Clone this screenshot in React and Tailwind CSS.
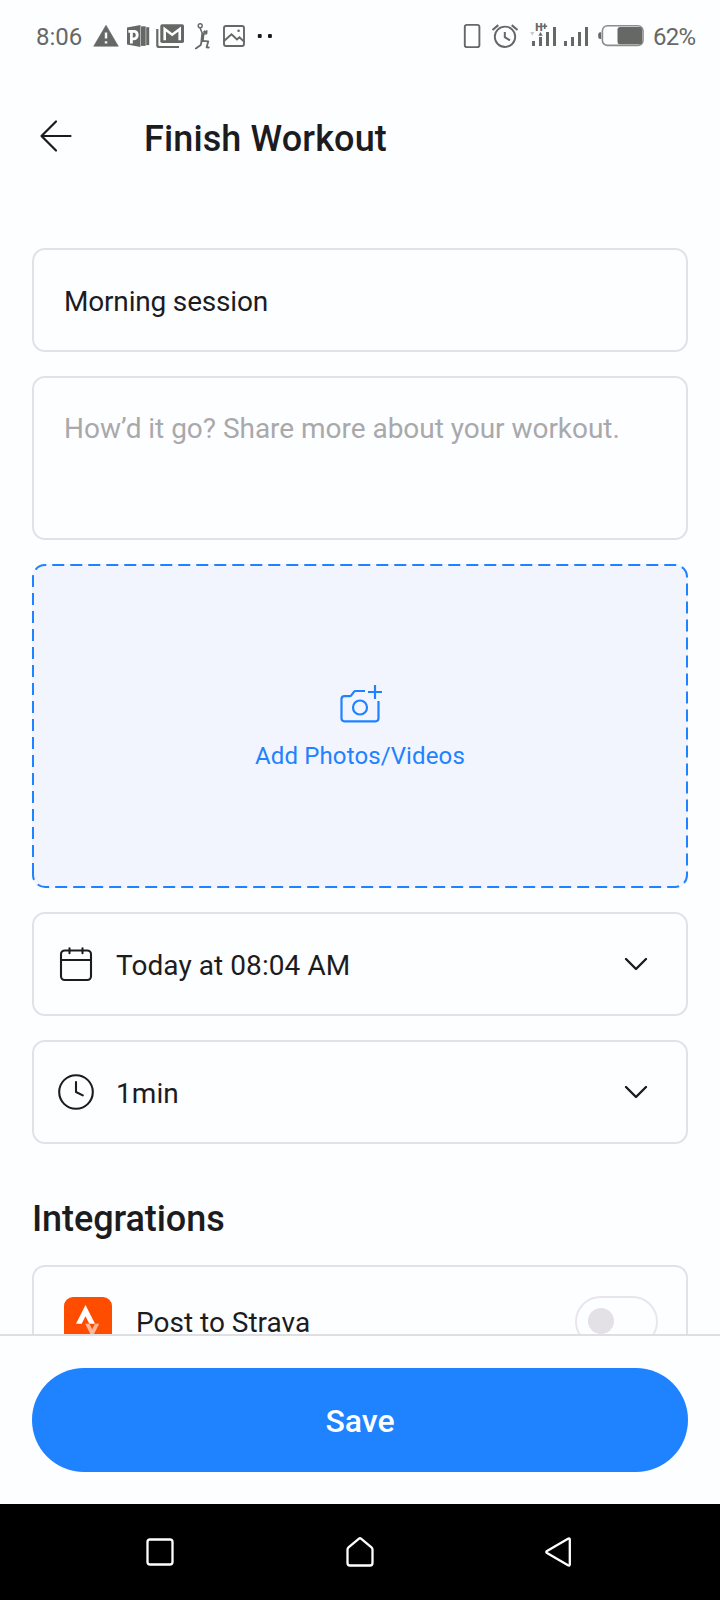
import React from "react";

function LeftStatus() {
  return (
    <div className="flex items-center text-[#666866]">
      <span className="w-[56px] pt-[2px] text-[24px] leading-7">8:06</span>
      <svg className="h-7 w-[28px]" viewBox="92 22 28 28" fill="currentColor">
        <path fillRule="evenodd" stroke="currentColor" strokeWidth=".6" strokeLinejoin="round" d="M106 25.2 118.3 46.2h-24.6zM104.6 32.2v6.6h2.9v-6.6zM104.6 41v2.8h2.9V41z" />
      </svg>
      <svg className="ml-[6px] h-7 w-[24px]" viewBox="126 22 24 28" fill="currentColor">
        <path d="M127 27.5 140.5 25v22L127 44.6z" />
        <path d="M141 26.3h4.7v19.6h-4.7z" />
        <path d="M146.2 27.2h3v17.9h-3z" />
        <path fillRule="evenodd" d="M128.4 30h6.2c5.4 0 5.600 10.200-.4 10.200h-1.400v3.300h-2.800v-10.700h-1.600zM132.800 32.800v4.600h1.300c2.200 0 2.200-4.600 0-4.600z" fill="#fdfeff" />
      </svg>
      <svg className="ml-[5px] h-7 w-[30px]" viewBox="155 22 30 28" fill="currentColor">
        <path d="M156.200 29h2.200v16a1 1 0 0 0 1 1H179v2.100h-20.500a2.300 2.300 0 0 1-2.300-2.300z" />
        <rect x="160.300" y="24.200" width="23.700" height="18.800" rx="1.800" />
        <path d="M164.700 40.300V29l7.500 5.700 7.500-5.700v11.300" fill="none" stroke="#fdfeff" strokeWidth="2.600" />
      </svg>
      <svg className="ml-[9px] h-7 w-[18px]" viewBox="194 22 18 28" fill="none" stroke="currentColor" strokeLinecap="round" strokeLinejoin="round">
        <circle cx="200.200" cy="25.700" r="2" strokeWidth="1.400" />
        <circle cx="204.800" cy="32" r="1.200" fill="currentColor" strokeWidth=".8" />
        <path d="m200.200 28.300 1.800 4.500 1.600 1.200 3-.2.200-3" strokeWidth="1.500" />
        <path d="m202.800 34.500-.6 6" strokeWidth="3.200" />
        <path d="m201.600 41-.8 4-5 3.400M202.500 40.800l5.800.5-1.700 6 2.200.2" strokeWidth="1.800" />
      </svg>
      <svg className="ml-[10px] h-7 w-[24px]" viewBox="222 22 24 28" fill="none" stroke="currentColor" strokeWidth="1.900">
        <rect x="224" y="26" width="20" height="20" rx="2" />
        <path d="m224 41 7.500-6.800 5.500 5.300 2.400-2.200 4.600 4.200" />
        <circle cx="238.600" cy="30.700" r="1.300" fill="currentColor" stroke="none" />
      </svg>
      <svg className="ml-[11px] h-7 w-[16px]" viewBox="257 22 16 28" fill="#1c1c1c">
        <rect x="257.800" y="34" width="3.900" height="3.900" rx="1" />
        <rect x="268" y="34" width="3.900" height="3.900" rx="1" />
      </svg>
    </div>
  );
}

function RightStatus() {
  return (
    <div className="flex items-center text-[#666866]">
      <svg className="h-7 w-[18px]" viewBox="463 22 18 28" fill="none" stroke="currentColor" strokeWidth="1.900">
        <rect x="464.800" y="24.900" width="14.600" height="22.200" rx="2.200" />
      </svg>
      <svg className="ml-[10px] h-7 w-[28px]" viewBox="491 22 28 28" fill="none" stroke="currentColor" strokeWidth="1.900">
        <circle cx="505" cy="36.800" r="10.200" />
        <path d="M504.800 32v5.200l5.200 3.200" strokeWidth="2" />
        <path d="m492.500 30 5.800-4.900M511.700 25.100l5.800 4.900" strokeWidth="2.100" />
      </svg>
      <svg className="ml-[11px] h-7 w-[27px]" viewBox="530 22 27 28" fill="currentColor">
        <path d="M532 41h3v5h-3zM539 37h3v9h-3zM546 32h3v14h-3zM553 27h3v19h-3z" />
        <path d="m538.300 35.800 2.200-3.800 2.200 3.800z" />
        <path d="m530.200 32 2.100 3.700 2.100-3.700z" opacity=".35" />
        <text x="535.200" y="31" fontSize="10.500" fontWeight="900">H</text>
        <path d="M542.200 25.400h1.700v-2h1.600v2h1.700v1.700h-1.700v2h-1.600v-2h-1.700z" />
      </svg>
      <svg className="ml-[6px] h-7 w-[26px]" viewBox="563 22 26 28" fill="currentColor">
        <path d="M564 41h3v5h-3zM571 37h3v9h-3zM578 32h3v14h-3zM585 27h3v19h-3z" />
      </svg>
      <svg className="ml-[8px] h-7 w-[48px]" viewBox="597 22 48 28">
        <path d="M601.200 32.300h-.8a2.200 2.200 0 0 0-2.200 2.200v2.200a2.200 2.200 0 0 0 2.200 2.200h.8z" fill="currentColor" />
        <rect x="602.400" y="25.800" width="40.600" height="19.600" rx="5" fill="none" stroke="#8b8d8b" strokeWidth="1.600" />
        <rect x="617.500" y="27" width="24.500" height="17.200" rx="2.500" fill="currentColor" />
      </svg>
      <span className="ml-2 w-[42px] pt-[2px] text-[24px] leading-7 tracking-[-0.700px]">62%</span>
    </div>
  );
}

function Chevron() {
  return (
    <svg className="h-6 w-6" viewBox="0 0 24 24" fill="none" stroke="#1c1c1f" strokeWidth="2.400" strokeLinecap="round" strokeLinejoin="round">
      <path d="m2 7 10 10 10-10" />
    </svg>
  );
}

function PickerRow({ icon, label }) {
  return (
    <button className="mt-6 flex h-[104px] w-full shrink-0 items-center rounded-[13px] border-2 border-[#e3e1e6] pl-6 pr-[38px] text-left">
      {icon}
      <span className="ml-[22px] flex-1 pt-1 text-[28px] leading-8 tracking-[0.070px]">{label}</span>
      <Chevron />
    </button>
  );
}

function CalendarIcon() {
  return (
    <svg className="h-9 w-9" viewBox="0 0 36 36" fill="none" stroke="currentColor" strokeWidth="2.100" strokeLinecap="round">
      <rect x="3" y="4.500" width="30" height="29.500" rx="3.800" />
      <path d="M3 14h30M11.500 2.300v5M24.500 2.300v5" />
    </svg>
  );
}

function ClockIcon() {
  return (
    <svg className="h-9 w-9" viewBox="0 0 36 36" fill="none" stroke="currentColor" strokeWidth="2.100" strokeLinecap="round" strokeLinejoin="round">
      <circle cx="18" cy="18" r="16.800" />
      <path d="M18 8v10l6.800 3.400" />
    </svg>
  );
}

export default function App() {
  return (
    <div className="flex h-[1600px] w-[720px] flex-col overflow-hidden bg-[#fdfeff] font-['Roboto',sans-serif] text-[#1c1c1f]">
      <div className="flex h-[72px] shrink-0 items-center justify-between pl-9 pr-[25px]">
        <LeftStatus />
        <RightStatus />
      </div>

      <header className="flex h-[128px] shrink-0 items-center pl-[38px]">
        <svg className="h-9 w-9" viewBox="0 0 36 36" fill="none" stroke="currentColor" strokeWidth="2.200" strokeLinecap="round" strokeLinejoin="round">
          <path d="M32.500 18H3.500M18 3.500 3.500 18 18 32.500" />
        </svg>
        <h1 className="ml-[70px] pt-[6px] text-[36px] font-medium leading-[42px] tracking-[0.120px]">Finish Workout</h1>
      </header>

      <main className="flex min-h-0 flex-1 flex-col overflow-hidden px-8 pt-12">
        <div className="flex h-[104px] shrink-0 items-center rounded-[13px] border-2 border-[#e3e1e6] px-[30px] pt-1 text-[28px] tracking-[-0.180px]">
          Morning session
        </div>
        <div className="mt-6 h-[164px] shrink-0 rounded-[13px] border-2 border-[#e3e1e6] px-[30px] pt-[35px] text-[28px] leading-8 tracking-[-0.030px] text-[#a9a9ab]">
          How’d it go? Share more about your workout.
        </div>

        <button className="relative mt-6 flex h-[324px] w-full shrink-0 flex-col items-center rounded-[13px] bg-[#f2f5fe] pt-[119px] text-[#1f82ff]">
          <svg className="absolute inset-0 h-[324px] w-[656px]" viewBox="0 0 656 324" fill="none" stroke="currentColor" strokeWidth="2" strokeDasharray="12 6">
            <path d="M1 311V13A12 12 0 0 1 13 1H643A12 12 0 0 1 655 13V311A12 12 0 0 1 643 323H13A12 12 0 0 1 1 311Z" />
          </svg>
          <svg className="h-[42px] w-[44px]" viewBox="338 683 44 42" fill="none" stroke="currentColor" strokeWidth="2.200" strokeLinejoin="round">
            <path d="M365 691h-9.500a2 2 0 0 0-1.600.8l-2.600 3.500a2 2 0 0 1-1.600.8H344.500a3 3 0 0 0-3 3v19.200a3 3 0 0 0 3 3h31a3 3 0 0 0 3-3V701" />
            <circle cx="360" cy="707.500" r="7" />
            <path d="M375 685v14M368 692h14" />
          </svg>
          <span className="mt-[15px] text-[24px] leading-8 tracking-[0.120px]">Add Photos/Videos</span>
        </button>

        <PickerRow icon={<CalendarIcon />} label="Today at 08:04 AM" />
        <PickerRow icon={<ClockIcon />} label="1min" />

        <h2 className="mt-[54px] shrink-0 text-[36px] font-medium leading-[42px] tracking-[-0.080px]">Integrations</h2>
        <div className="mt-[25px] flex h-[112px] shrink-0 items-center rounded-[13px] border-2 border-[#e3e1e6] pl-[30px] pr-[28px]">
          <svg className="h-12 w-12" viewBox="0 0 48 48">
            <rect width="48" height="48" rx="9" fill="#ff4d00" />
            <g transform="translate(7.3 8) scale(1.357)" fill="#fff">
              <path d="M10.463 8.229l2.836 5.599h4.172L10.463 0l-7 13.828h4.169z" />
              <path d="M15.387 17.944l-2.089-4.116h-3.065L15.387 24l5.150-10.172h-3.066z" opacity=".6" />
            </g>
          </svg>
          <span className="ml-6 flex-1 pt-1 text-[28px] leading-8">Post to Strava</span>
          <span className="flex h-[51px] w-[83px] items-center rounded-full border-2 border-[#e8e6ea] pl-[11px]">
            <span className="h-[26px] w-[26px] rounded-full bg-[#e3e1e6]" />
          </span>
        </div>
      </main>

      <footer className="h-[170px] shrink-0 border-t-2 border-[#dfdfe2] px-8 pt-8">
        <button className="h-[104px] w-full rounded-full bg-[#1f82ff] pt-[2px] text-[32px] font-medium text-[#fdfeff]">Save</button>
      </footer>

      <nav className="flex h-24 shrink-0 items-center justify-around bg-black px-[60px] text-white">
        <svg className="h-9 w-9" viewBox="0 0 36 36" fill="none" stroke="currentColor" strokeWidth="2.300" strokeLinejoin="round">
          <rect x="5.500" y="5.500" width="25" height="25" rx="2.500" />
        </svg>
        <svg className="h-9 w-9" viewBox="0 0 36 36" fill="none" stroke="currentColor" strokeWidth="2.300" strokeLinejoin="round">
          <path d="M5.500 15.800q0-1.600 1-2.500L17 4.700q1-.8 2 0l10.500 8.600q1 .9 1 2.500v13.200q0 2.500-2.500 2.500H8q-2.500 0-2.500-2.500z" />
        </svg>
        <svg className="h-9 w-9" viewBox="0 0 36 36" fill="none" stroke="currentColor" strokeWidth="2.300" strokeLinejoin="round">
          <path d="M26 4.700 5 17q-1.500 1 0 2l21 12.300q1.800.9 1.800-1V5.700q0-1.900-1.800-1z" />
        </svg>
      </nav>
    </div>
  );
}
